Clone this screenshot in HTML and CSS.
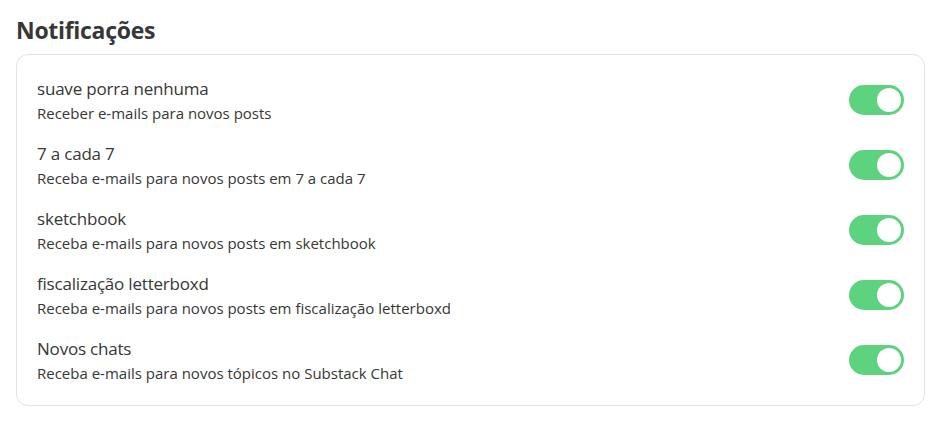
FILE: index.html
```html
<!DOCTYPE html>
<html lang="pt">
<head>
<meta charset="utf-8">
<link rel="stylesheet" href="styles.css">
</head>
<body>
<main class="page">
  <h2 class="heading">Notificações</h2>
  <section class="card">
    <div class="row">
      <div class="text">
        <div class="title">suave porra nenhuma</div>
        <div class="desc">Receber e-mails para novos posts</div>
      </div>
      <span class="toggle"><span class="knob"></span></span>
    </div>
    <div class="row">
      <div class="text">
        <div class="title">7 a cada 7</div>
        <div class="desc">Receba e-mails para novos posts em 7 a cada 7</div>
      </div>
      <span class="toggle"><span class="knob"></span></span>
    </div>
    <div class="row">
      <div class="text">
        <div class="title">sketchbook</div>
        <div class="desc">Receba e-mails para novos posts em sketchbook</div>
      </div>
      <span class="toggle"><span class="knob"></span></span>
    </div>
    <div class="row">
      <div class="text">
        <div class="title">fiscalização letterboxd</div>
        <div class="desc">Receba e-mails para novos posts em fiscalização letterboxd</div>
      </div>
      <span class="toggle"><span class="knob"></span></span>
    </div>
    <div class="row">
      <div class="text">
        <div class="title">Novos chats</div>
        <div class="desc">Receba e-mails para novos tópicos no Substack Chat</div>
      </div>
      <span class="toggle"><span class="knob"></span></span>
    </div>
  </section>
</main>
</body>
</html>
```
FILE: styles.css
```css
* { box-sizing: border-box; }
html, body { margin: 0; padding: 0; background: #fff; }
body {
  font-family: "Open Sans", "Noto Sans", sans-serif;
  color: #363737;
}
.page {
  padding: 14px 16px 16px 16px;
}
.heading {
  margin: 0 0 8px 0;
  font-size: 23px;
  line-height: 32px;
  font-weight: 700;
  color: #363737;
  letter-spacing: -0.3px;
}
.card {
  border: 1px solid #e3e3e3;
  border-radius: 12px;
  padding: 22px 20px 20px 20px;
  display: flex;
  flex-direction: column;
  gap: 17px;
}
.row {
  display: flex;
  align-items: center;
  justify-content: space-between;
}
.text {
  display: flex;
  flex-direction: column;
}
.title {
  font-size: 17px;
  line-height: 24px;
  color: #363737;
  letter-spacing: -0.2px;
}
.desc {
  font-size: 15px;
  line-height: 24px;
  color: #363737;
}
.toggle {
  width: 55px;
  height: 30px;
  border-radius: 15px;
  background: #5dd27f;
  display: flex;
  align-items: center;
  justify-content: flex-end;
  padding: 3px;
  margin-top: -2px;
}
.knob {
  width: 24px;
  height: 24px;
  border-radius: 50%;
  background: #fff;
}
```
